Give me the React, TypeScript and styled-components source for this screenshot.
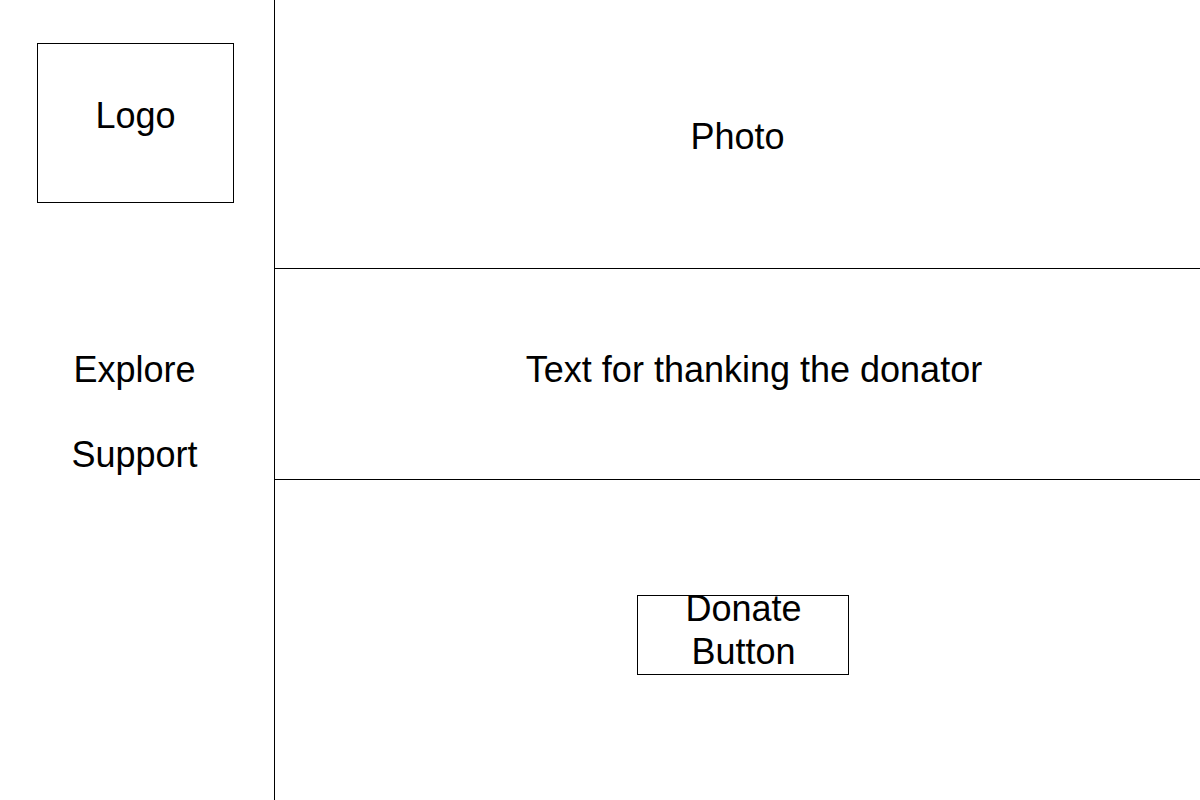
import React from "react";
import styled, { createGlobalStyle } from "styled-components";

const GlobalStyle = createGlobalStyle`
  html, body {
    margin: 0;
    padding: 0;
    background: #ffffff;
  }
  body {
    font-family: "Liberation Sans", Arial, sans-serif;
    color: #000000;
  }
  * { box-sizing: border-box; }
`;

const Page = styled.div`
  display: flex;
  width: 1200px;
  height: 800px;
  font-size: 36px;
  line-height: 40px;
`;

const Sidebar = styled.aside`
  width: 275px;
  flex: none;
  border-right: 1px solid #000;
  display: flex;
  flex-direction: column;
  padding-top: 43px;
`;

const LogoBox = styled.div`
  width: 197px;
  height: 160px;
  margin-left: 37px;
  border: 1px solid #000;
  display: flex;
  justify-content: center;
  padding-top: 52px;
`;

const Nav = styled.nav`
  display: flex;
  flex-direction: column;
  align-items: center;
  gap: 45px;
  margin-top: 147px;
  padding-right: 5px;
`;

const NavItem = styled.span`
  display: block;
`;

const Main = styled.main`
  flex: 1;
  display: flex;
  flex-direction: column;
`;

const Section = styled.section<{ $h?: number; $pt?: number; $pb?: number; $pl?: number; $border?: boolean }>`
  display: flex;
  align-items: center;
  justify-content: center;
  height: ${(p) => (p.$h ? `${p.$h}px` : "auto")};
  flex: ${(p) => (p.$h ? "none" : "1")};
  padding-top: ${(p) => p.$pt ?? 0}px;
  padding-bottom: ${(p) => p.$pb ?? 0}px;
  padding-left: ${(p) => p.$pl ?? 0}px;
  border-bottom: ${(p) => (p.$border ? "1px solid #000" : "none")};
`;

const DonateButton = styled.button`
  width: 212px;
  height: 80px;
  margin-left: 10px;
  border: 1px solid #000;
  background: #fff;
  color: #000;
  font: inherit;
  font-size: 36px;
  line-height: 43px;
  padding: 0 0 10px 2px;
  display: flex;
  flex-direction: column;
  align-items: center;
  justify-content: center;
  cursor: pointer;
`;

const ButtonLine = styled.span`
  display: block;
  white-space: nowrap;
`;

export default function App() {
  return (
    <>
      <GlobalStyle />
      <Page>
        <Sidebar>
          <LogoBox>Logo</LogoBox>
          <Nav>
            <NavItem>Explore</NavItem>
            <NavItem>Support</NavItem>
          </Nav>
        </Sidebar>
        <Main>
          <Section $h={269} $pt={5} $border>
            Photo
          </Section>
          <Section $h={211} $pb={9} $pl={33} $border>
            Text for thanking the donator
          </Section>
          <Section $pb={11}>
            <DonateButton>
              <ButtonLine>Donate</ButtonLine>
              <ButtonLine>Button</ButtonLine>
            </DonateButton>
          </Section>
        </Main>
      </Page>
    </>
  );
}
